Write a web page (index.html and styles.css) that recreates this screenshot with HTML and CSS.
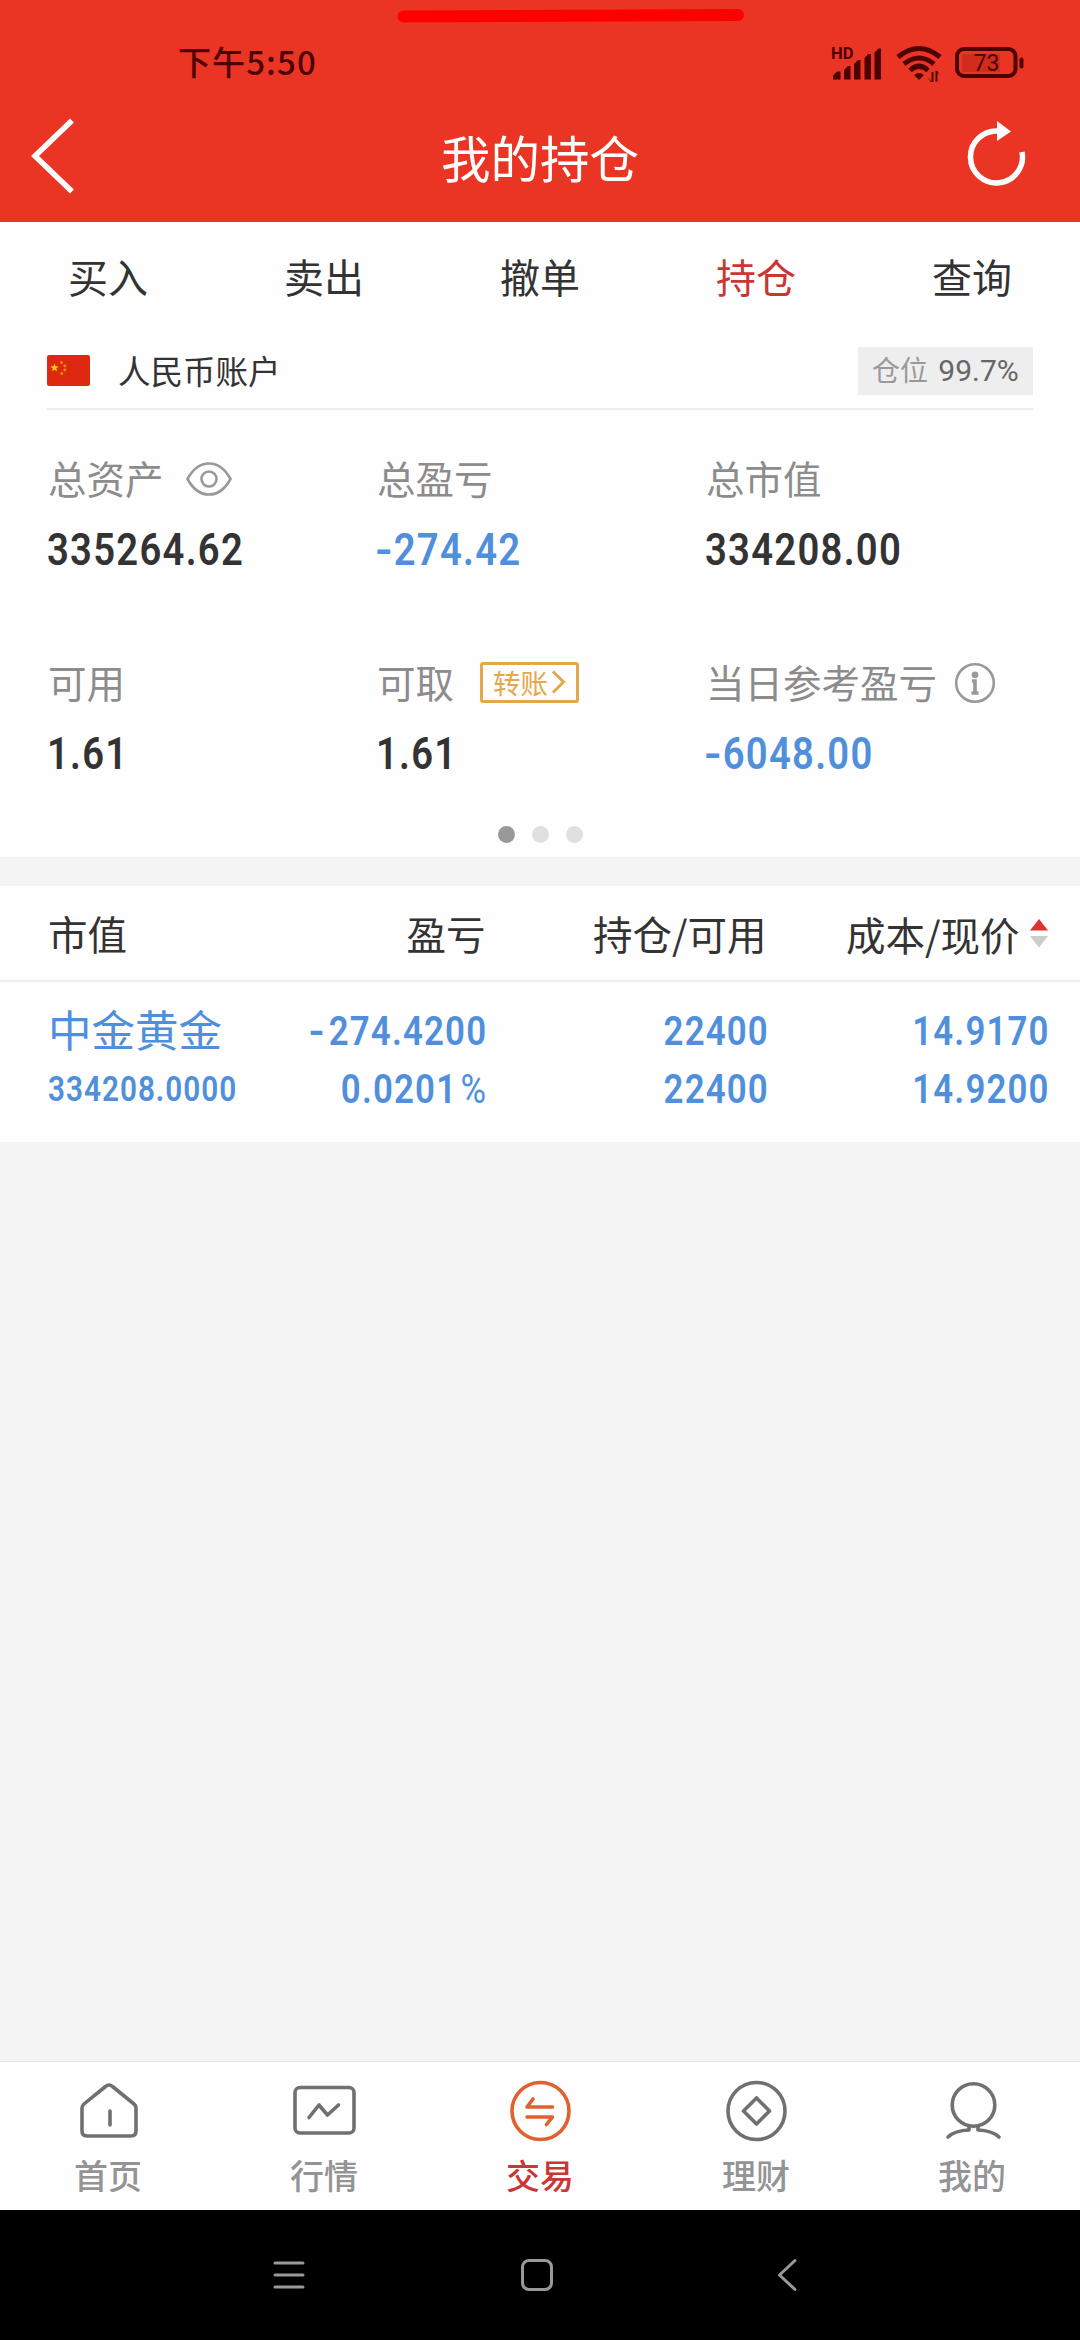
FILE: index.html
```html
<!DOCTYPE html>
<html lang="zh-CN">
<head>
  <meta charset="UTF-8">
  <meta name="viewport" content="width=device-width, initial-scale=1.0">
  <title>我的持仓</title>
  <link rel="stylesheet" href="styles.css">
</head>
<body>
  <div id="app">
    <header class="header">
      <svg class="marker" width="352" height="18" viewBox="0 0 352 18">
        <line x1="8.500" y1="9.500" x2="343" y2="8" />
      </svg>
      <div class="status-bar">
        <span class="time">下午5:50</span>
        <div class="status-icons">
          <svg class="signal" width="52" height="36" viewBox="0 0 52 36">
            <text x="0" y="14">HD</text>
            <path d="M2 34.500v-4l4-4h3.500v8zM13 34.500V25l4-4h2.500v13.500zM23 34.500V19l4-4h2.500v19.500zM33.500 34.500V13l4-4H40v25.500zM43.500 34.500V7.500l4-4H50v31z" />
          </svg>
          <svg class="wifi" width="48" height="38" viewBox="0 0 48 38">
            <path d="M3 13Q24-4 45 13M9 20Q24 8 39 20M15 26.500Q24 18 33 26.500" />
            <path class="solid" d="M19 31q5-4 10 0l-5 5zM32 32l4.500 5.500V28h2v11h-2zM46 33l-3.500-5v9.500h-2V27h2z" />
          </svg>
          <svg class="battery" width="70" height="32" viewBox="0 0 70 32">
            <rect class="charge" x="7" y="7" width="38" height="18" />
            <rect class="shell" x="2" y="2" width="58.500" height="27" rx="7" />
            <rect class="tip" x="64.500" y="10.500" width="4" height="11" rx="2" />
            <text x="31.500" y="23.500">73</text>
          </svg>
        </div>
      </div>
      <div class="title-bar">
        <svg class="back" width="60" height="80" viewBox="0 0 60 80">
          <path d="M52 4.500 15 40 52 75.500" />
        </svg>
        <h1>我的持仓</h1>
        <svg class="refresh" width="64" height="72" viewBox="0 0 64 72">
          <path class="arc" d="M34 11A26 26 0 1 0 58 32" />
          <path class="head" d="M33 1 47 11.500 33 21z" />
        </svg>
      </div>
    </header>

    <nav class="tabs">
      <a>买入</a>
      <a>卖出</a>
      <a>撤单</a>
      <a class="active">持仓</a>
      <a>查询</a>
    </nav>

    <section class="account">
      <div class="account-bar">
        <svg class="flag" width="43" height="31" viewBox="0 0 43 31">
          <rect width="43" height="31" rx="2" fill="#de2910" />
          <path d="M7.500 8.500l1.100 2.800 3 .2-2.300 1.900.8 2.900-2.600-1.600-2.500 1.600.8-2.900-2.400-1.900 3-.2z" fill="#ffcf00" />
          <g fill="#f08a10">
            <circle cx="14.500" cy="7.500" r="1.400" />
            <circle cx="17.800" cy="11" r="1.400" />
            <circle cx="17.800" cy="15" r="1.400" />
            <circle cx="14.800" cy="18.500" r="1.400" />
          </g>
        </svg>
        <span class="account-name">人民币账户</span>
        <span class="position">仓位 <b>99.7%</b></span>
      </div>

      <div class="summary">
        <div class="cell">
          <div class="label">总资产
            <svg class="eye" width="46" height="34" viewBox="0 0 46 34">
              <path d="M1.500 17Q10 1.500 23 1.500T44.500 17Q36 32.500 23 32.500T1.500 17z" />
              <circle cx="23" cy="17" r="7.500" />
            </svg>
          </div>
          <div class="value"><span class="num">335264.62</span></div>
        </div>
        <div class="cell">
          <div class="label">总盈亏</div>
          <div class="value down"><span class="num"><i>-</i>274.42</span></div>
        </div>
        <div class="cell">
          <div class="label">总市值</div>
          <div class="value"><span class="num">334208.00</span></div>
        </div>
        <div class="cell">
          <div class="label">可用</div>
          <div class="value"><span class="num">1.61</span></div>
        </div>
        <div class="cell">
          <div class="label">可取
            <span class="transfer">转账<svg width="15" height="24" viewBox="0 0 15 24"><path d="M2 1.500 12.500 12 2 22.500" /></svg></span>
          </div>
          <div class="value"><span class="num">1.61</span></div>
        </div>
        <div class="cell">
          <div class="label">当日参考盈亏
            <svg class="info" width="42" height="42" viewBox="0 0 42 42">
              <circle cx="21" cy="21" r="18.800" />
              <circle class="dot" cx="21" cy="12.800" r="3.400" />
              <path d="M18 19h3v12M17.500 31h7" />
            </svg>
          </div>
          <div class="value down"><span class="num"><i>-</i>6048.00</span></div>
        </div>
      </div>

      <div class="dots">
        <span class="on"></span>
        <span></span>
        <span></span>
      </div>
    </section>

    <section class="holdings">
      <div class="row thead">
        <span>市值</span>
        <span>盈亏</span>
        <span>持仓/可用</span>
        <span class="sortable">成本/现价
          <svg class="sort" width="18" height="30" viewBox="0 0 18 30">
            <path d="M0 12.500 9 1l9 11.500z" fill="#dc3430" />
            <path d="M0 18h18L9 29.500z" fill="#ccc" />
          </svg>
        </span>
      </div>
      <div class="row item">
        <div>
          <p class="stock">中金黄金</p>
          <p class="small"><span class="num">334208.0000</span></p>
        </div>
        <div>
          <p><span class="num"><i>-</i>274.4200</span></p>
          <p><span class="num">0.0201<em>%</em></span></p>
        </div>
        <div>
          <p><span class="num">22400</span></p>
          <p><span class="num">22400</span></p>
        </div>
        <div>
          <p><span class="num">14.9170</span></p>
          <p><span class="num">14.9200</span></p>
        </div>
      </div>
    </section>

    <nav class="bottom-nav">
      <a>
        <svg width="64" height="64" viewBox="0 0 64 64">
          <path d="M29.500 7.500q3.500-3 7 0L58 25q2 1.700 2 4v23q0 5-5 5H11q-5 0-5-5V29q0-2.300 2-4zM34 32v14" />
        </svg>
        <span>首页</span>
      </a>
      <a>
        <svg width="64" height="64" viewBox="0 0 64 64">
          <rect x="3" y="8.500" width="59" height="45.500" rx="5" />
          <path d="M17 38.500 27 26l8.500 10L46.500 26" />
        </svg>
        <span>行情</span>
      </a>
      <a class="active">
        <svg width="64" height="64" viewBox="0 0 64 64">
          <circle cx="32.500" cy="32" r="28.500" />
          <path d="M25 20l-6 8h25.500M19 38h25.500l-6 7.500" />
        </svg>
        <span>交易</span>
      </a>
      <a>
        <svg width="64" height="64" viewBox="0 0 64 64">
          <circle cx="32.500" cy="32" r="28.500" />
          <path d="M32.500 19l13 13-13 13-13-13z" />
        </svg>
        <span>理财</span>
      </a>
      <a>
        <svg width="64" height="64" viewBox="0 0 64 64">
          <circle cx="33.500" cy="26" r="21.300" />
          <path d="M29 47v4Q15 51.500 8 58M38 47v4q14 .5 21 7" />
        </svg>
        <span>我的</span>
      </a>
    </nav>

    <div class="system-nav">
      <svg width="34" height="34" viewBox="0 0 34 34">
        <path d="M3 5h28M3 17h28M3 29h28" />
      </svg>
      <svg width="34" height="34" viewBox="0 0 34 34">
        <rect x="2.500" y="2.500" width="29" height="29" rx="6.500" />
      </svg>
      <svg width="34" height="34" viewBox="0 0 34 34">
        <path d="M27 2.500 11.500 17 27 31.500" />
      </svg>
    </div>
  </div>
</body>
</html>
```

FILE: styles.css
```css
* {
  box-sizing: border-box;
}

body {
  margin: 0;
  font-family: "Noto Sans CJK SC", sans-serif;
  color: #333;
  background-color: #f4f4f4;
}

#app {
  width: 1080px;
  height: 2340px;
  display: flex;
  flex-direction: column;
  overflow: hidden;
}

svg {
  display: block;
  flex: none;
  fill: none;
}

p, h1 {
  margin: 0;
}

/* header */
.header {
  position: relative;
  height: 222px;
  background-color: #ea3524;
}

.marker {
  position: absolute;
  top: 7px;
  left: 395px;
}

.marker line {
  stroke: #ff0000;
  stroke-width: 12;
  stroke-linecap: round;
}

.status-bar {
  height: 96px;
  padding: 30px 55px 0 178px;
  display: flex;
  justify-content: space-between;
  align-items: center;
  color: #4d0000;
}

.time {
  padding-bottom: 3px;
  font-size: 33px;
  font-weight: 500;
  line-height: 63px;
  letter-spacing: 1.1px;
}

.status-icons {
  display: flex;
  align-items: center;
  gap: 12px;
}

.signal, .battery .tip, .wifi .solid {
  fill: #4d0000;
}

.signal text {
  font: bold 16.5px "Roboto", sans-serif;
}

.wifi {
  stroke: #4d0000;
  stroke-width: 5;
}

.wifi .solid {
  stroke: none;
}

.battery .shell {
  stroke: #4d0000;
  stroke-width: 4;
}

.battery .charge {
  fill: #d22c1d;
}

.battery text {
  font: 400 23px "Roboto", sans-serif;
  fill: #4d0000;
  text-anchor: middle;
}

.title-bar {
  height: 120px;
  padding: 0 52px 0 20px;
  display: flex;
  justify-content: space-between;
  align-items: center;
}

.title-bar h1 {
  margin-left: 36px;
  font-size: 49.500px;
  font-weight: 400;
  line-height: 119px;
  color: #fff;
}

.back {
  stroke: #fff;
  stroke-width: 5.5;
}

.refresh .arc {
  stroke: #fff;
  stroke-width: 5.5;
}

.refresh .head {
  fill: #fff;
}

/* tabs */
.tabs {
  display: flex;
  height: 112px;
  background-color: #fefefe;
}

.tabs a {
  flex: 1;
  text-align: center;
  font-size: 40px;
  line-height: 108px;
}

.tabs .active {
  color: #c93734;
}

/* account summary */
.account {
  height: 523px;
  padding: 0 47px;
  background-color: #fefefe;
}

.account-bar {
  display: flex;
  align-items: center;
  height: 76px;
  border-bottom: 2px solid #eee;
}

.flag {
  margin-bottom: 2px;
}

.account-name {
  margin-left: 28px;
  padding-bottom: 4px;
  font-size: 32.500px;
}

.position {
  width: 175px;
  margin-left: auto;
  height: 48px;
  padding-left: 14px;
  font-size: 28px;
  line-height: 45px;
  color: #999;
  background-color: #eee;
}

.position b {
  margin-left: 4px;
  font-family: "Roboto", sans-serif;
  font-size: 30px;
  font-weight: 400;
  color: #666;
}

.summary {
  display: grid;
  grid-template-columns: repeat(3, 329px);
  grid-auto-rows: 204px;
  padding-top: 40px;
}

.label {
  display: flex;
  align-items: center;
  height: 58px;
  padding: 0 0 4px 1px;
  font-size: 38.500px;
  color: #8c8c8c;
  white-space: nowrap;
}

.value {
  height: 84px;
  font-size: 45px;
  line-height: 75px;
}

.num {
  display: inline-block;
  font-family: "Roboto", sans-serif;
  font-weight: 600;
  letter-spacing: 0.033em;
  transform: scaleX(0.85);
  transform-origin: left;
}

.num i {
  display: inline-block;
  width: 0.49em;
  font-style: normal;
  letter-spacing: 0;
  transform: scaleX(1.25);
  transform-origin: left;
}

.down {
  color: #4f8fdc;
}

.down .num {
  margin-left: -1px;
}

.eye {
  margin: 3px 0 0 22px;
  stroke: #999;
  stroke-width: 2.6;
}

.transfer {
  display: flex;
  align-items: center;
  width: 99px;
  height: 41px;
  margin: 2px 0 0 26px;
  padding-left: 10px;
  border: 3px solid #e3a84c;
  border-radius: 3px;
  font-size: 27.500px;
  line-height: 34px;
  color: #e3a84c;
}

.transfer svg {
  margin-left: 3px;
  stroke: #e3a84c;
  stroke-width: 3;
}

.info {
  margin: 3px 0 0 17px;
  stroke: #999;
  stroke-width: 2.6;
}

.info .dot {
  fill: #999;
  stroke: none;
}

.info path {
  stroke-width: 3.6;
}

.dots {
  display: flex;
  justify-content: center;
  gap: 17px;
  margin-top: -32px;
}

.dots span {
  width: 17px;
  height: 17px;
  border-radius: 50%;
  background-color: #e0e0e0;
}

.dots .on {
  background-color: #999;
}

/* holdings table */
.holdings {
  margin-top: 29px;
  height: 256px;
  background-color: #fefefe;
}

.row {
  display: grid;
  grid-template-columns: 220px 217.500px 281px 281px;
  padding-left: 48px;
  text-align: right;
}

.row > :first-child {
  text-align: left;
}

.thead {
  height: 96px;
  border-bottom: 2px solid #eee;
  font-size: 39.500px;
  line-height: 93px;
}

.sortable {
  display: flex;
  justify-content: flex-end;
  align-items: center;
}

.sort {
  margin-left: 10px;
}

.item {
  padding-top: 20px;
  color: #4f8fdc;
  font-size: 41px;
}

.item p {
  height: 58px;
  line-height: 51px;
}

.item .num {
  margin-right: -2px;
  transform-origin: right;
}

.item .num i {
  width: 0.58em;
  text-align: left;
}

.item .num em {
  margin-left: 4px;
  font-style: normal;
  font-weight: 400;
}

.item .stock {
  font-size: 43.500px;
  line-height: 54px;
}

.item .small {
  font-size: 35px;
}

.item .small .num {
  transform-origin: left;
}

/* bottom navigation */
.bottom-nav {
  display: flex;
  height: 149px;
  margin-top: auto;
  border-top: 1px solid #e8e8e8;
  background-color: #fefefe;
}

.bottom-nav a {
  flex: 1;
  display: flex;
  flex-direction: column;
  align-items: center;
  padding-top: 17px;
  font-size: 34px;
  font-weight: 500;
  line-height: 64px;
  color: #949494;
}

.bottom-nav svg {
  stroke: #707070;
  stroke-width: 3.6;
  stroke-linejoin: round;
  stroke-linecap: round;
}

.bottom-nav .active {
  color: #c93734;
}

.bottom-nav .active svg {
  stroke: #e2602f;
}

.system-nav {
  display: flex;
  justify-content: center;
  gap: 214px;
  height: 130px;
  padding: 48px 6px 0 0;
  background-color: #000;
}

.system-nav svg {
  stroke: #999;
  stroke-width: 3;
  stroke-linecap: round;
  stroke-linejoin: round;
}
```
